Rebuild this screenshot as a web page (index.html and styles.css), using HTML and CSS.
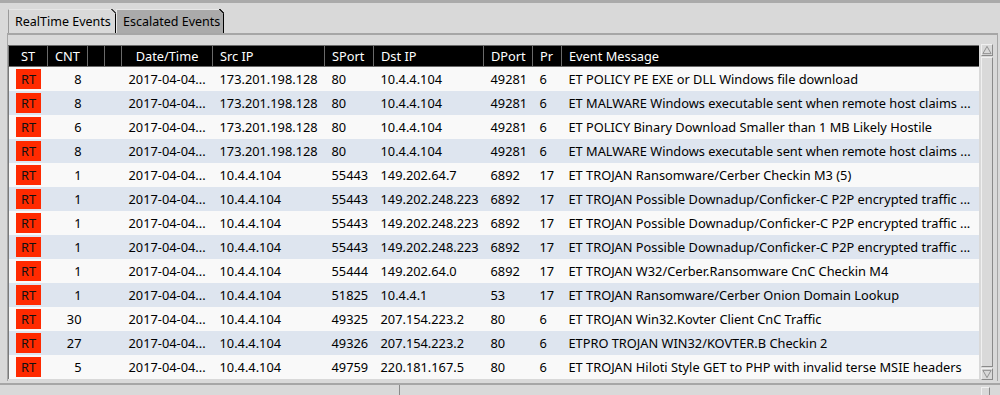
FILE: index.html
```html
<!DOCTYPE html>
<html lang="en">
<head>
    <meta charset="UTF-8">
    <title>Events</title>
    <link rel="stylesheet" href="styles.css">
</head>
<body>
    <div class="window">
        <div class="tabs">
            <div class="tab active">RealTime Events</div>
            <div class="tab">Escalated Events</div>
        </div>

        <div class="panel">
            <div class="grid">
                <table class="events">
                    <colgroup>
                        <col style="width:39px"><col style="width:40px"><col style="width:17px"><col style="width:17px">
                        <col style="width:91px"><col style="width:112px"><col style="width:49px"><col style="width:110px">
                        <col style="width:49px"><col style="width:29px"><col style="width:417px">
                    </colgroup>
                    <thead>
                        <tr>
                            <th class="c">ST</th><th class="c">CNT</th><th></th><th></th><th class="c">Date/Time</th>
                            <th>Src IP</th><th>SPort</th><th>Dst IP</th><th>DPort</th><th>Pr</th><th>Event Message</th>
                        </tr>
                    </thead>
                    <tbody>
                        <tr><td><span class="st">RT</span></td><td class="cnt">8</td><td></td><td></td><td>2017-04-04...</td><td>173.201.198.128</td><td>80</td><td>10.4.4.104</td><td>49281</td><td>6</td><td>ET POLICY PE EXE or DLL Windows file download</td></tr>
                        <tr><td><span class="st">RT</span></td><td class="cnt">8</td><td></td><td></td><td>2017-04-04...</td><td>173.201.198.128</td><td>80</td><td>10.4.4.104</td><td>49281</td><td>6</td><td>ET MALWARE Windows executable sent when remote host claims ...</td></tr>
                        <tr><td><span class="st">RT</span></td><td class="cnt">6</td><td></td><td></td><td>2017-04-04...</td><td>173.201.198.128</td><td>80</td><td>10.4.4.104</td><td>49281</td><td>6</td><td>ET POLICY Binary Download Smaller than 1 MB Likely Hostile</td></tr>
                        <tr><td><span class="st">RT</span></td><td class="cnt">8</td><td></td><td></td><td>2017-04-04...</td><td>173.201.198.128</td><td>80</td><td>10.4.4.104</td><td>49281</td><td>6</td><td>ET MALWARE Windows executable sent when remote host claims ...</td></tr>
                        <tr><td><span class="st">RT</span></td><td class="cnt">1</td><td></td><td></td><td>2017-04-04...</td><td>10.4.4.104</td><td>55443</td><td>149.202.64.7</td><td>6892</td><td>17</td><td>ET TROJAN Ransomware/Cerber Checkin M3 (5)</td></tr>
                        <tr><td><span class="st">RT</span></td><td class="cnt">1</td><td></td><td></td><td>2017-04-04...</td><td>10.4.4.104</td><td>55443</td><td>149.202.248.223</td><td>6892</td><td>17</td><td>ET TROJAN Possible Downadup/Conficker-C P2P encrypted traffic ...</td></tr>
                        <tr><td><span class="st">RT</span></td><td class="cnt">1</td><td></td><td></td><td>2017-04-04...</td><td>10.4.4.104</td><td>55443</td><td>149.202.248.223</td><td>6892</td><td>17</td><td>ET TROJAN Possible Downadup/Conficker-C P2P encrypted traffic ...</td></tr>
                        <tr><td><span class="st">RT</span></td><td class="cnt">1</td><td></td><td></td><td>2017-04-04...</td><td>10.4.4.104</td><td>55443</td><td>149.202.248.223</td><td>6892</td><td>17</td><td>ET TROJAN Possible Downadup/Conficker-C P2P encrypted traffic ...</td></tr>
                        <tr><td><span class="st">RT</span></td><td class="cnt">1</td><td></td><td></td><td>2017-04-04...</td><td>10.4.4.104</td><td>55444</td><td>149.202.64.0</td><td>6892</td><td>17</td><td>ET TROJAN W32/Cerber.Ransomware CnC Checkin M4</td></tr>
                        <tr><td><span class="st">RT</span></td><td class="cnt">1</td><td></td><td></td><td>2017-04-04...</td><td>10.4.4.104</td><td>51825</td><td>10.4.4.1</td><td>53</td><td>17</td><td>ET TROJAN Ransomware/Cerber Onion Domain Lookup</td></tr>
                        <tr><td><span class="st">RT</span></td><td class="cnt">30</td><td></td><td></td><td>2017-04-04...</td><td>10.4.4.104</td><td>49325</td><td>207.154.223.2</td><td>80</td><td>6</td><td>ET TROJAN Win32.Kovter Client CnC Traffic</td></tr>
                        <tr><td><span class="st">RT</span></td><td class="cnt">27</td><td></td><td></td><td>2017-04-04...</td><td>10.4.4.104</td><td>49326</td><td>207.154.223.2</td><td>80</td><td>6</td><td>ETPRO TROJAN WIN32/KOVTER.B Checkin 2</td></tr>
                        <tr><td><span class="st">RT</span></td><td class="cnt">5</td><td></td><td></td><td>2017-04-04...</td><td>10.4.4.104</td><td>49759</td><td>220.181.167.5</td><td>80</td><td>6</td><td>ET TROJAN Hiloti Style GET to PHP with invalid terse MSIE headers</td></tr>
                    </tbody>
                </table>

                <div class="vscroll">
                    <div class="arrow">
                        <svg width="11" height="10" viewBox="0 0 11 10"><path d="M5.5 1 L10 9 L1 9 Z" fill="#d9d9d9" stroke="#8a8a8a"/></svg>
                    </div>
                    <div class="thumb"></div>
                    <div class="arrow">
                        <svg width="11" height="10" viewBox="0 0 11 10"><path d="M1 1 L10 1 L5.5 9 Z" fill="#d9d9d9" stroke="#8a8a8a"/></svg>
                    </div>
                </div>
            </div>
        </div>

        <div class="bottom">
            <div class="pane-left"></div>
            <div class="pane-right"></div>
            <div class="corner"></div>
        </div>
    </div>
</body>
</html>
```

FILE: styles.css
```css
html, body {
    margin: 0;
    padding: 0;
}
body {
    background: #d9d9d9;
    font-family: "Noto Sans", "Open Sans", sans-serif;
    font-size: 12.8px;
    color: #000;
}
.window {
    width: 1000px;
    height: 395px;
    border-top: 3px solid #aaaaaa;
    box-sizing: border-box;
    display: flex;
    flex-direction: column;
    overflow: hidden;
}

/* tabs */
.tabs {
    display: flex;
    padding: 6px 0 0 8px;
    height: 24px;
    flex-shrink: 0;
}
.tab {
    position: relative;
    height: 24px;
    line-height: 23px;
    padding: 0 6px;
    width: 108px;
    box-sizing: border-box;
    background: #aaaaaa;
    border-left: 1px solid #e6e6e6;
    border-top: 1px solid #e6e6e6;
    border-right: 1px solid #000;
    white-space: nowrap;
    font-size: 12.5px;
}
.tab.active {
    background: #d9d9d9;
    border-left-color: #9a9a9a;
    z-index: 1;
}
.tab::after {
    content: "";
    position: absolute;
    right: -1px;
    top: -1px;
    width: 5px;
    height: 5px;
    background: linear-gradient(45deg, transparent 48%, #222 50%, #222 60%, #d9d9d9 62%);
}
.tab.active::after {
    background: linear-gradient(45deg, transparent 48%, #444 50%, #444 60%, #d9d9d9 62%);
}

/* panel */
.panel {
    border-top: 2px solid #a6a6a6;
    border-left: 1px solid #a6a6a6;
    border-right: 1px solid #a6a6a6;
    margin: 0 2px 0 7px;
    padding: 10px 2px 0 0;
    height: 348px;
    box-sizing: border-box;
    flex-shrink: 0;
    overflow: hidden;
}
.grid {
    display: flex;
    align-items: flex-start;
}

/* table */
.events {
    border-collapse: collapse;
    table-layout: fixed;
    width: 970px;
    flex-shrink: 0;
    border-left: 1px solid #7a7a7a;
}
.events th {
    height: 21px;
    padding: 0 0 0 7px;
    background: #000;
    color: #fff;
    font-weight: normal;
    text-align: left;
    border-left: 1px solid #6a6a6a;
    border-top: 1px solid #6a6a6a;
    border-bottom: 1px solid #6a6a6a;
    box-sizing: border-box;
    white-space: nowrap;
}
.events th:first-child {
    border-left: none;
}
.events th.c {
    text-align: center;
    padding: 0;
}
.events td {
    height: 24px;
    padding: 0 0 0 7px;
    white-space: nowrap;
    overflow: hidden;
}
.events tbody tr:nth-child(odd) {
    background: #f9f9f9;
}
.events tbody tr:nth-child(even) {
    background: #dee5ef;
}
.events td.cnt {
    text-align: right;
    padding: 0 6px 0 0;
}
.st {
    display: block;
    width: 25px;
    height: 20px;
    line-height: 20px;
    text-align: center;
    background: #ff2a00;
    color: #111;
}

/* scrollbar */
.vscroll {
    width: 12px;
    height: 336px;
    margin-left: 2px;
    margin-top: -1px;
    display: flex;
    flex-direction: column;
    flex-shrink: 0;
}
.arrow {
    height: 12px;
    box-sizing: border-box;
    border: 1px solid;
    border-color: #f0f0f0 #8a8a8a #8a8a8a #f0f0f0;
    display: flex;
    align-items: center;
    justify-content: center;
}
.arrow svg {
    display: block;
}
.thumb {
    flex: 1;
    box-sizing: border-box;
    border: 1px solid;
    border-color: #f0f0f0 #8a8a8a #8a8a8a #f0f0f0;
    margin: 1px 0;
}

/* bottom strip */
.bottom {
    flex: 1;
    display: flex;
    border-top: 2px solid #a6a6a6;
    margin-top: 2px;
    position: relative;
}
.pane-left {
    width: 399px;
    border-right: 1px solid #8a8a8a;
}
.pane-right {
    flex: 1;
}
.corner {
    position: absolute;
    left: 981px;
    top: 2px;
    width: 9px;
    height: 12px;
    box-sizing: border-box;
    border: 1px solid;
    border-color: #f0f0f0 #8a8a8a #8a8a8a #f0f0f0;
}
```
